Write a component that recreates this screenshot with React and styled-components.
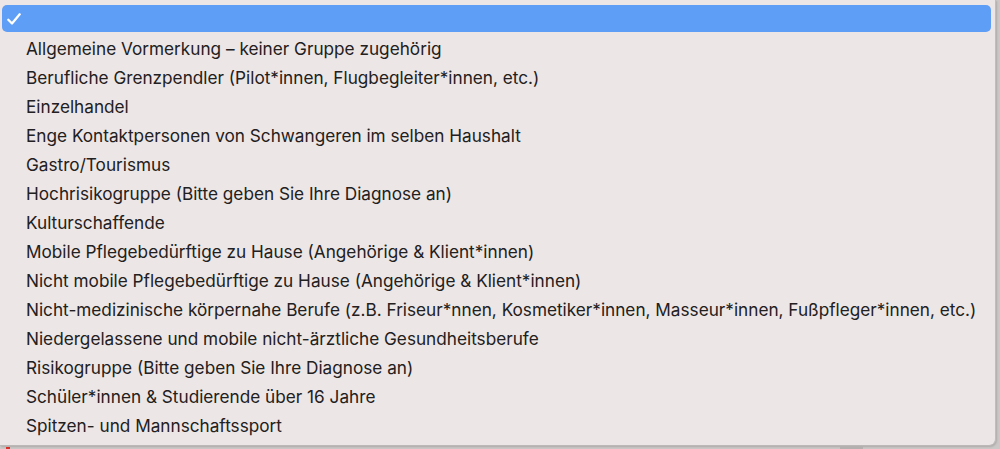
import React from "react";
import styled, { createGlobalStyle } from "styled-components";

const options = [
    "Allgemeine Vormerkung – keiner Gruppe zugehörig",
    "Berufliche Grenzpendler (Pilot*innen, Flugbegleiter*innen, etc.)",
    "Einzelhandel",
    "Enge Kontaktpersonen von Schwangeren im selben Haushalt",
    "Gastro/Tourismus",
    "Hochrisikogruppe (Bitte geben Sie Ihre Diagnose an)",
    "Kulturschaffende",
    "Mobile Pflegebedürftige zu Hause (Angehörige & Klient*innen)",
    "Nicht mobile Pflegebedürftige zu Hause (Angehörige & Klient*innen)",
    "Nicht-medizinische körpernahe Berufe (z.B. Friseur*nnen, Kosmetiker*innen, Masseur*innen, Fußpfleger*innen, etc.)",
    "Niedergelassene und mobile nicht-ärztliche Gesundheitsberufe",
    "Risikogruppe (Bitte geben Sie Ihre Diagnose an)",
    "Schüler*innen & Studierende über 16 Jahre",
    "Spitzen- und Mannschaftssport",
];

const GlobalStyle = createGlobalStyle`
    html, body {
        margin: 0;
        padding: 0;
        background: #cdc8c8;
        height: 449px;
        overflow: hidden;
    }
`;

export default function App() {
    return (
        <>
            <GlobalStyle />
            <Page>
                <Menu>
                    <Row selected>
                        <Check>
                            <svg width="14" height="12" viewBox="0 0 14 12">
                                <path d="M1.3 6.8 L5 10.5 L12.7 1.3" fill="none" stroke="#fff" strokeWidth="2.3" strokeLinecap="round" strokeLinejoin="round" />
                            </svg>
                        </Check>
                    </Row>
                    {options.map((opt) => (
                        <Row key={opt}>
                            <Check />
                            <Label>{opt}</Label>
                        </Row>
                    ))}
                </Menu>
                <Under>
                    <RedMark />
                    <DarkMark />
                </Under>
            </Page>
        </>
    );
}

const Page = styled.div`
    width: 1000px;
    height: 449px;
    display: flex;
    flex-direction: column;
`;

const Menu = styled.div`
    width: 996px;
    height: 446px;
    box-sizing: border-box;
    background: #ece6e6;
    border-right: 1px solid #c2bdbd;
    border-bottom: 1px solid #bdb8b8;
    border-bottom-right-radius: 7px;
    padding: 5px 4px 0 2px;
    display: flex;
    flex-direction: column;
    box-shadow: 1px 1px 2px rgba(0, 0, 0, 0.15);
`;

const Row = styled.div`
    height: ${(p) => (p.selected ? "27px" : "29px")};
    margin-bottom: ${(p) => (p.selected ? "2px" : "0")};
    display: flex;
    align-items: center;
    border-radius: 5px;
    background: ${(p) => (p.selected ? "#5f9ef6" : "transparent")};
    flex-shrink: 0;
`;

const Check = styled.span`
    width: 24px;
    display: flex;
    padding-left: 5px;
    box-sizing: border-box;
`;

const Label = styled.span`
    font-family: Inter, "Liberation Sans", Arial, sans-serif;
    font-size: 17.2px;
    color: #222020;
    white-space: nowrap;
`;

const Under = styled.div`
    position: relative;
    flex: 1;
`;

const RedMark = styled.div`
    position: absolute;
    left: 6px;
    top: 1px;
    width: 4px;
    height: 3px;
    background: #d9302a;
`;

const DarkMark = styled.div`
    position: absolute;
    left: 840px;
    top: 0;
    width: 23px;
    height: 3px;
    background: #b5b0b0;
`;
